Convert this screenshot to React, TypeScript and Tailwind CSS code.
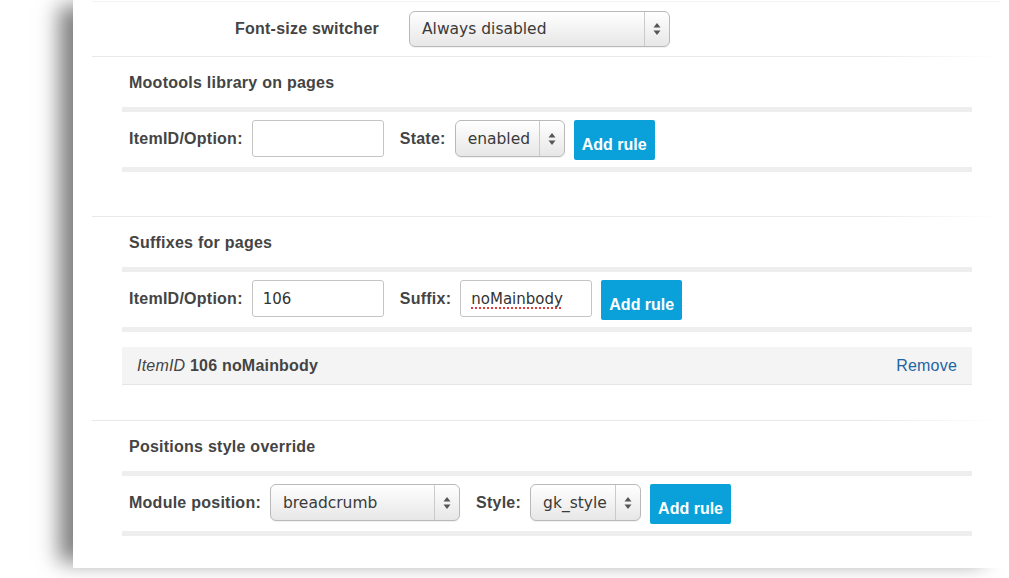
import React from 'react'

const labelCls = "font-['Liberation_Sans',Arial,sans-serif] text-[16px] font-bold tracking-[0.25px] text-[#444] leading-5"

const Arrows = () => (
  <svg width="8" height="14" viewBox="0 0 8 14" className="text-[#555]">
    <path d="M4 1 L7.5 5.5 H0.5 Z" fill="currentColor" />
    <path d="M4 13 L7.5 8.5 H0.5 Z" fill="currentColor" />
  </svg>
)

const Select = ({ value, width, height = 37 }: { value: string; width: number; height?: number }) => (
  <div
    className="flex items-stretch rounded-[6px] border border-[#b9b9b9] bg-linear-to-b from-[#ffffff] to-[#e7e7e7] shadow-[inset_0_1px_0_#fff,0_1px_1px_rgba(0,0,0,0.06)]"
    style={{ width, height }}
  >
    <div className="flex flex-1 items-center pl-[12px] pt-[2px] font-['DejaVu_Sans',sans-serif] text-[15.5px] text-[#3a3a3a]">
      {value}
    </div>
    <div className="flex w-[25px] items-center justify-center border-l border-[#cacaca]">
      <Arrows />
    </div>
  </div>
)

const TextInput = ({ value, width = 132, squiggle = false }: { value?: string; width?: number; squiggle?: boolean }) => (
  <div
    className="flex h-[37px] items-center rounded-[3px] border border-[#c4c4c4] bg-white pl-[10px] pt-[2px] font-['DejaVu_Sans',sans-serif] text-[15px] text-[#333]"
    style={{ width }}
  >
    {value && (
      <span className={squiggle ? 'underline decoration-dotted decoration-[#e23a3a] decoration-2 underline-offset-[3px]' : ''}>
        {value}
      </span>
    )}
  </div>
)

const AddRule = () => (
  <button className="flex h-[40px] w-[81px] items-start justify-center rounded-[2px] bg-[#0aa0da] pt-[15px] font-['Liberation_Sans',Arial,sans-serif] text-[16px] font-bold leading-5 text-white">
    Add rule
  </button>
)

const Line = () => (
  <div className="ml-[19px] mr-[9px] h-px bg-linear-to-r from-[#e8e8e8] from-85% to-transparent" />
)

const Bar = () => <div className="h-[5px] bg-[#eeeeee]" />

const Heading = ({ children }: { children: React.ReactNode }) => (
  <div className={`${labelCls} pl-[7px] pt-[16px] pb-[14px]`}>{children}</div>
)

export default function App() {
  return (
    <div className="h-[578px] overflow-hidden bg-white">
      <div className="ml-[73px] h-[568px] bg-white pt-px shadow-[-20px_0_20px_-6px_rgba(0,0,0,0.5)]">
        <div className="ml-[19px] mr-[9px] h-px bg-[#f3f3f3]" />

        {/* top option */}
        <div className="mt-[9px] flex h-[36px] items-center">
          <div className={`${labelCls} w-[306px] text-right`}>Font-size switcher</div>
          <div className="ml-[30px]">
            <Select value="Always disabled" width={261} height={36} />
          </div>
        </div>
        <div className="h-[9px]" />
        <Line />

        {/* Mootools */}
        <div className="ml-[49px] mr-[37px]">
          <Heading>Mootools library on pages</Heading>
          <Bar />
          <div className="flex h-[55px] items-start pl-[7px] pt-[8px]">
            <div className={`${labelCls} mr-[9px] flex h-[37px] items-center`}>ItemID/Option:</div>
            <TextInput />
            <div className={`${labelCls} ml-[16px] mr-[9px] flex h-[37px] items-center`}>State:</div>
            <Select value="enabled" width={110} />
            <div className="ml-[9px]">
              <AddRule />
            </div>
          </div>
          <Bar />
          <div className="h-[44px]" />
        </div>
        <Line />

        {/* Suffixes */}
        <div className="ml-[49px] mr-[37px]">
          <Heading>Suffixes for pages</Heading>
          <Bar />
          <div className="flex h-[55px] items-start pl-[7px] pt-[8px]">
            <div className={`${labelCls} mr-[9px] flex h-[37px] items-center`}>ItemID/Option:</div>
            <TextInput value="106" />
            <div className={`${labelCls} ml-[16px] mr-[9px] flex h-[37px] items-center`}>Suffix:</div>
            <TextInput value="noMainbody" squiggle />
            <div className="ml-[9px]">
              <AddRule />
            </div>
          </div>
          <Bar />
          <div className="mt-[15px] flex h-[38px] items-center justify-between border-b border-[#e6e6e6] bg-[#f4f4f4] px-[15px] pt-px font-['Liberation_Sans',Arial,sans-serif] text-[16px] tracking-[0.2px] text-[#444]">
            <div>
              <span className="italic">ItemID</span> <span className="font-bold">106 noMainbody</span>
            </div>
            <a className="text-[#1e64a3]">Remove</a>
          </div>
          <div className="h-[35px]" />
        </div>
        <Line />

        {/* Positions */}
        <div className="ml-[49px] mr-[37px]">
          <Heading>Positions style override</Heading>
          <Bar />
          <div className="flex h-[55px] items-start pl-[7px] pt-[8px]">
            <div className={`${labelCls} mr-[9px] flex h-[37px] items-center`}>Module position:</div>
            <Select value="breadcrumb" width={190} />
            <div className={`${labelCls} ml-[16px] mr-[9px] flex h-[37px] items-center`}>Style:</div>
            <Select value="gk_style" width={111} />
            <div className="ml-[9px]">
              <AddRule />
            </div>
          </div>
          <Bar />
        </div>
      </div>
    </div>
  )
}
